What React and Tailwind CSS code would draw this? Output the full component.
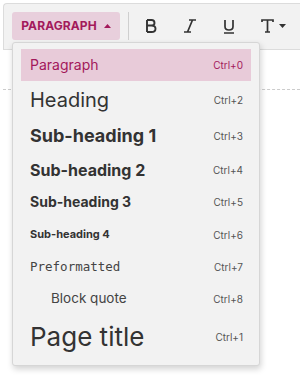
import React from "react";

const items = [
  { label: "Paragraph", key: "Ctrl+0", h: "h-[32px]", cls: "text-[14px] text-[#a3195b]", active: true },
  { label: "Heading", key: "Ctrl+2", h: "h-[37px]", cls: "text-[20px] text-[#333]" },
  { label: "Sub-heading 1", key: "Ctrl+3", h: "h-[35px]", cls: "text-[18px] font-bold text-[#333]" },
  { label: "Sub-heading 2", key: "Ctrl+4", h: "h-[33px]", cls: "text-[16px] font-bold text-[#333]" },
  { label: "Sub-heading 3", key: "Ctrl+5", h: "h-[32px]", cls: "text-[14px] font-bold text-[#333]" },
  { label: "Sub-heading 4", key: "Ctrl+6", h: "h-[33px]", cls: "text-[11px] font-bold text-[#333]" },
  { label: "Preformatted", key: "Ctrl+7", h: "h-[32px]", cls: "text-[12.5px] text-[#444] font-['DejaVu_Sans_Mono',monospace]" },
  { label: "Block quote", key: "Ctrl+8", h: "h-[32px]", cls: "text-[13.5px] text-[#444] pl-[21px]" },
  { label: "Page title", key: "Ctrl+1", h: "h-[44px]", cls: "text-[26px] text-[#333]" },
];

export default function App() {
  return (
    <div className="relative w-[300px] h-[386px] bg-white overflow-hidden font-['Inter',sans-serif]">
      <div className="pl-[3px] pt-[3px]">
        <div className="h-[47px] bg-[#f2f2f2] border border-[#dcdcdc] border-r-0 rounded-tl-[4px] flex items-start pt-[8px] pl-[8px]">
          <div className="h-[28px] w-[108px] bg-[#e8cfdc] rounded-[3px] flex items-center justify-center gap-[7px]">
            <span className="text-[12px] font-bold text-[#a3195b] tracking-[0.1px]">PARAGRAPH</span>
            <svg width="7" height="4" viewBox="0 0 7 4"><path d="M0 4 L3.5 0 L7 4 Z" fill="#a3195b" /></svg>
          </div>
          <div className="ml-[8px] w-px h-[28px] bg-[#cfcfcf]" />
          <div className="flex items-center h-[28px] ml-[16px] gap-[26px]">
            <svg width="12" height="14" viewBox="0 0 12 14" fill="none" stroke="#333" strokeWidth="1.9">
              <path d="M2 1 V13 M2 1 H6.5 C9 1 9.5 3 9.5 4 C9.5 5.5 8.5 6.5 6.5 6.5 H2 M6.5 6.5 C9.5 6.5 10.5 8 10.5 9.7 C10.5 11.5 9 13 6.5 13 H2" />
            </svg>
            <svg width="14" height="14" viewBox="0 0 14 14" fill="none" stroke="#333" strokeWidth="1.7">
              <path d="M6 1 H13 M1 13 H8 M9.5 1 L4.5 13" />
            </svg>
            <svg width="12" height="15" viewBox="0 0 12 15" fill="none" stroke="#333" strokeWidth="1.7">
              <path d="M2 1 V7.5 C2 10 3.8 11 6 11 C8.2 11 10 10 10 7.5 V1 M1 14 H11" />
            </svg>
            <div className="flex items-center gap-[5px]">
              <svg width="13" height="14" viewBox="0 0 13 14" fill="none" stroke="#333" strokeWidth="1.7">
                <path d="M1 3 V1 H12 V3 M6.5 1 V13 M4 13 H9" />
              </svg>
              <svg width="7" height="4" viewBox="0 0 7 4"><path d="M0 0 L3.5 4 L7 0 Z" fill="#333" /></svg>
            </div>
          </div>
        </div>
        <div className="h-[40px] border-b border-dashed border-[#ccc]" />
      </div>

      <div className="absolute left-[12px] top-[42px] w-[248px] bg-[#f2f2f2] border border-[#d6d6d6] rounded-[3px] shadow-[1px_3px_6px_rgba(0,0,0,0.18)] px-[8px] pt-[6px] pb-[6px]">
        {items.map((it) => (
          <div
            key={it.label}
            className={`${it.h} flex items-center justify-between pl-[9px] pr-[8px] ${it.active ? "bg-[#e8cbd9]" : ""}`}
          >
            <span className={`${it.cls} leading-none whitespace-nowrap`}>{it.label}</span>
            <span className={`text-[10px] leading-none ${it.active ? "text-[#a3195b]" : "text-[#555]"}`}>{it.key}</span>
          </div>
        ))}
      </div>
    </div>
  );
}
